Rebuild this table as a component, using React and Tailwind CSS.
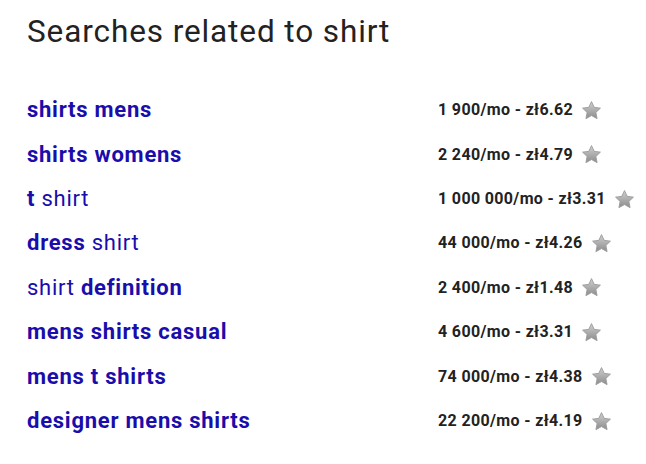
import React from "react";

const rows = [
  { parts: [["shirts mens", true]], stat: "1 900/mo - zł6.62" },
  { parts: [["shirts womens", true]], stat: "2 240/mo - zł4.79" },
  { parts: [["t", true], [" shirt", false]], stat: "1 000 000/mo - zł3.31" },
  { parts: [["dress", true], [" shirt", false]], stat: "44 000/mo - zł4.26" },
  { parts: [["shirt ", false], ["definition", true]], stat: "2 400/mo - zł1.48" },
  { parts: [["mens shirts casual", true]], stat: "4 600/mo - zł3.31" },
  { parts: [["mens t shirts", true]], stat: "74 000/mo - zł4.38" },
  { parts: [["designer mens shirts", true]], stat: "22 200/mo - zł4.19" },
];

function Star({ id }) {
  return (
    <svg width="21" height="21" viewBox="0 0 24 24" className="shrink-0">
      <defs>
        <linearGradient id={id} x1="0" y1="0" x2="0" y2="1">
          <stop offset="0" stopColor="#d0d0d0" />
          <stop offset="1" stopColor="#8c8c8c" />
        </linearGradient>
      </defs>
      <path
        d="M12 1.8l3.1 6.6 7.1.9-5.2 4.9 1.4 7.1L12 17.8l-6.4 3.5 1.4-7.1-5.2-4.9 7.1-.9z"
        fill={`url(#${id})`}
        stroke="#999"
        strokeWidth="1"
        strokeLinejoin="round"
      />
    </svg>
  );
}

export default function App() {
  return (
    <div className="w-[646px] h-[464px] bg-white pl-[27px] pt-[12px]" style={{ fontFamily: "Roboto, 'Liberation Sans', sans-serif" }}>
      <h2 className="text-[31.5px] leading-[40px] tracking-[0.9px] text-[#222] font-normal">Searches related to shirt</h2>
      <div className="mt-[36px] flex flex-col">
        {rows.map((r, i) => (
          <div key={i} className="grid grid-cols-[411px_1fr] items-center h-[44.43px]">
            <div className="text-[22px] tracking-[0.75px] text-[#1a0dab] leading-none whitespace-pre">
              {r.parts.map(([t, b], j) => (
                <span key={j} className={b ? "font-bold" : "font-normal"}>{t}</span>
              ))}
            </div>
            <div className="flex items-center gap-[8px]">
              <span className="text-[16px] tracking-[0.35px] font-bold text-[#222] leading-none">{r.stat}</span>
              <Star id={`g${i}`} />
            </div>
          </div>
        ))}
      </div>
    </div>
  );
}
